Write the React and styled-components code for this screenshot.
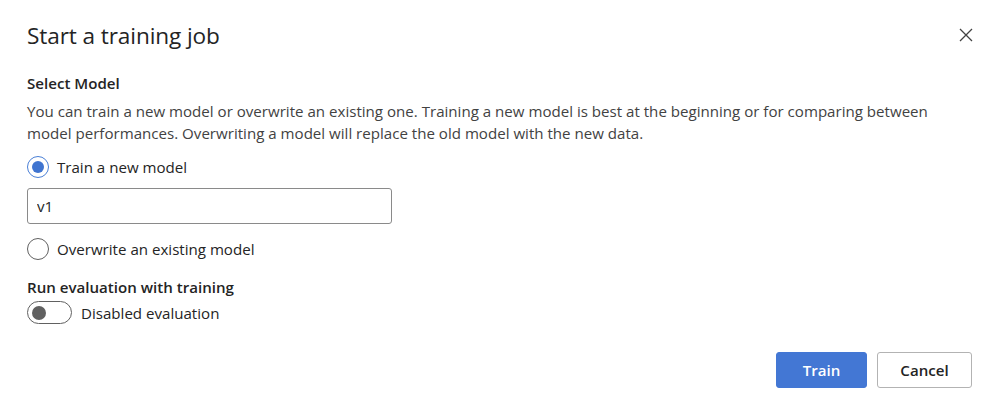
import React from 'react';
import styled, { createGlobalStyle } from 'styled-components';

const GlobalStyle = createGlobalStyle`
  html, body {
    margin: 0;
    padding: 0;
    background: #ffffff;
  }
  body {
    font-family: "Open Sans", "Noto Sans", "Liberation Sans", sans-serif;
    color: #242424;
  }
`

const Dialog = styled.div`
  width: 999px;
  height: 410px;
  box-sizing: border-box;
  padding: 20px 27px 22px 27px;
  display: flex;
  flex-direction: column;
`

const Header = styled.div`
  display: flex;
  align-items: center;
  justify-content: space-between;
  height: 30px;
`

const Title = styled.h1`
  margin: 0;
  font-size: 22.6px;
  font-weight: 400;
  color: #242424;
  letter-spacing: -0.1px;
`

const CloseButton = styled.button`
  border: none;
  background: transparent;
  padding: 0;
  width: 20px;
  height: 20px;
  margin-right: -4px;
  display: flex;
  align-items: center;
  justify-content: center;
  cursor: pointer;
`

const SectionLabel = styled.div`
  font-size: 15.1px;
  font-weight: 600;
  line-height: 22px;
  color: #242424;
  margin-top: ${p => p.$top}px;
`

const Description = styled.p`
  margin: 6px 0 0 0;
  font-size: 15.1px;
  line-height: 22px;
  color: #424242;
  max-width: 935px;
`

const RadioRow = styled.label`
  display: flex;
  align-items: center;
  gap: 8px;
  height: 24px;
  margin-top: ${p => p.$top}px;
  font-size: 15.1px;
  color: #242424;
`

const RadioCircle = styled.span`
  width: 20px;
  height: 20px;
  border-radius: 50%;
  border: 1px solid ${p => (p.$checked ? '#4a7fd6' : '#616161')};
  display: flex;
  align-items: center;
  justify-content: center;
  flex-shrink: 0;
  &::after {
    content: '';
    display: ${p => (p.$checked ? 'block' : 'none')};
    width: 12px;
    height: 12px;
    border-radius: 50%;
    background: #3f74d0;
  }
`

const TextInput = styled.input`
  margin-top: 9px;
  width: 365px;
  height: 36px;
  box-sizing: border-box;
  border: 1px solid #8a8a8a;
  border-radius: 3px;
  padding: 0 9px;
  font-family: inherit;
  font-size: 15.1px;
  color: #242424;
  outline: none;
`

const ToggleRow = styled.div`
  display: flex;
  align-items: center;
  gap: 9px;
  margin-top: 3px;
  font-size: 15.1px;
  color: #242424;
`

const ToggleTrack = styled.span`
  width: 45px;
  height: 23px;
  box-sizing: border-box;
  border: 1px solid #616161;
  border-radius: 12px;
  display: flex;
  align-items: center;
  padding-left: 4px;
  &::after {
    content: '';
    width: 14px;
    height: 14px;
    border-radius: 50%;
    background: #616161;
  }
`

const Footer = styled.div`
  margin-top: auto;
  display: flex;
  justify-content: flex-end;
  gap: 10px;
`

const Button = styled.button`
  height: 36px;
  min-width: ${p => p.$width}px;
  box-sizing: border-box;
  border-radius: 3px;
  font-family: inherit;
  font-size: 15.1px;
  font-weight: 600;
  cursor: pointer;
  border: 1px solid ${p => (p.$primary ? '#4377d4' : '#b3b3b3')};
  background: ${p => (p.$primary ? '#4377d4' : '#ffffff')};
  color: ${p => (p.$primary ? '#ffffff' : '#242424')};
`

function Dismiss() {
  return (
    <svg width="16" height="16" viewBox="0 0 16 16">
      <path d="M2 2 L14 14 M14 2 L2 14" stroke="#424242" strokeWidth="1.3" fill="none" />
    </svg>
  )
}

export default function App() {
  return (
    <>
      <GlobalStyle />
      <Dialog>
        <Header>
          <Title>Start a training job</Title>
          <CloseButton aria-label="Close"><Dismiss /></CloseButton>
        </Header>
        <SectionLabel $top={22}>Select Model</SectionLabel>
        <Description>
          You can train a new model or overwrite an existing one. Training a new model is best at the beginning or for comparing between model performances. Overwriting a model will replace the old model with the new data.
        </Description>
        <RadioRow $top={11}>
          <RadioCircle $checked />
          Train a new model
        </RadioRow>
        <TextInput defaultValue="v1" />
        <RadioRow $top={13}>
          <RadioCircle />
          Overwrite an existing model
        </RadioRow>
        <SectionLabel $top={15}>Run evaluation with training</SectionLabel>
        <ToggleRow>
          <ToggleTrack />
          Disabled evaluation
        </ToggleRow>
        <Footer>
          <Button $primary $width={91}>Train</Button>
          <Button $width={95}>Cancel</Button>
        </Footer>
      </Dialog>
    </>
  )
}
